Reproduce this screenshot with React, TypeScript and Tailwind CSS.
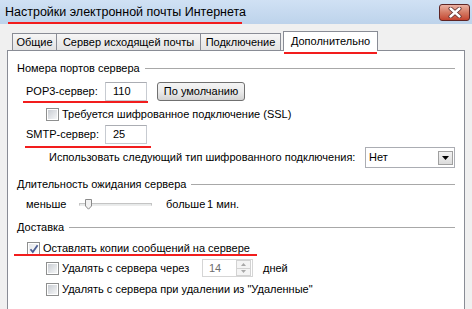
import React from "react";

function Checkbox({ checked = false }: { checked?: boolean }) {
  return (
    <div className="w-[13px] h-[13px] shrink-0 border border-[#8e8f8f] bg-white p-[1px] relative">
      <div
        className={
          checked
            ? "w-full h-full bg-gradient-to-br from-[#e6e8eb] to-[#fcfcfc]"
            : "w-full h-full bg-gradient-to-br from-[#c9cdd3] to-[#f5f6f7]"
        }
      />
      {checked && (
        <svg className="absolute left-[1px] top-[1px]" width="10" height="10" viewBox="0 0 10 10">
          <path d="M1.5 5.2 L3.8 8 L8.6 1.2" fill="none" stroke="#4b5d93" strokeWidth="1.8" />
        </svg>
      )}
    </div>
  );
}

function Header({ text }: { text: string }) {
  return (
    <div className="h-[16px] flex items-center ml-[9px] mr-[9px]">
      <span className="leading-none whitespace-nowrap">{text}</span>
      <div className="flex-1 h-px bg-[#a8a8a8] ml-[5px]" />
    </div>
  );
}

function TextField({ value, w }: { value: string; w: string }) {
  return (
    <div
      className={`${w} h-[19px] border border-[#c7cbd1] border-t-[#abadb3] bg-white flex items-center pl-[7px] leading-none`}
    >
      {value}
    </div>
  );
}

export default function App() {
  return (
    <div className="w-[472px] h-[309px] overflow-hidden bg-[#f0f0f0] font-['Liberation_Sans',Arial,sans-serif] text-[11px] text-black relative">
      {/* Title bar */}
      <div className="h-[24px] flex items-start bg-gradient-to-b from-[#d0e1f4] to-[#bdd3eb]">
        <span className="text-[12.5px] leading-none ml-[5px] mt-[6px] whitespace-nowrap">
          Настройки электронной почты Интернета
        </span>
        <div className="ml-auto mr-[2px] mt-[4px] w-[31px] h-[17px] rounded-[3px] border border-[#5e2525] bg-gradient-to-b from-[#eab1a4] via-[#d47a64] to-[#c4432f] flex items-center justify-center">
          <svg width="14" height="11" viewBox="0 0 14 11">
            <path d="M2.5 1.5 L11.5 9.5 M11.5 1.5 L2.5 9.5" stroke="#5b2a2a" strokeWidth="4" strokeLinecap="round" />
            <path d="M2.5 1.5 L11.5 9.5 M11.5 1.5 L2.5 9.5" stroke="#ffffff" strokeWidth="2.4" strokeLinecap="round" />
          </svg>
        </div>
      </div>

      {/* Tabs */}
      <div className="h-[26px] flex items-end pl-[12px]">
        <div className="w-[45px] h-[17px] border border-b-0 border-[#898c95] bg-gradient-to-b from-[#f6f6f6] to-[#e3e3e3] flex items-center justify-center leading-none">
          Общие
        </div>
        <div className="-ml-px w-[145px] h-[17px] border border-b-0 border-[#898c95] bg-gradient-to-b from-[#f6f6f6] to-[#e3e3e3] flex items-center justify-center leading-none whitespace-nowrap">
          Сервер исходящей почты
        </div>
        <div className="-ml-px w-[81px] h-[17px] border border-b-0 border-[#898c95] bg-gradient-to-b from-[#f6f6f6] to-[#e3e3e3] flex items-center justify-center leading-none">
          Подключение
        </div>
        <div className="ml-[2px] w-[95px] h-[20px] -mb-px relative z-10 border border-b-0 border-[#898c95] bg-white flex items-center justify-center leading-none pb-[1px]">
          Дополнительно
        </div>
      </div>

      {/* Panel */}
      <div className="ml-[7px] w-[458px] h-[270px] border border-[#898c95] bg-white flex flex-col">
        <div className="mt-[9px]">
          <Header text="Номера портов сервера" />
        </div>

        <div className="mt-[6px] h-[19px] flex items-center ml-[18px]">
          <span className="w-[79px] leading-none whitespace-nowrap">POP3-сервер:</span>
          <TextField value="110" w="w-[42px]" />
          <div className="ml-[10px] w-[88px] h-[19px] rounded-[3px] border border-[#707070] bg-gradient-to-b from-[#f4f4f4] via-[#ebebeb] to-[#d3d3d3] flex items-center justify-center leading-none whitespace-nowrap">
            По умолчанию
          </div>
        </div>

        <div className="mt-[6px] h-[14px] flex items-center ml-[38px]">
          <Checkbox />
          <span className="ml-[3px] leading-none whitespace-nowrap">Требуется шифрованное подключение (SSL)</span>
        </div>

        <div className="mt-[4px] h-[19px] flex items-center ml-[18px]">
          <span className="w-[79px] leading-none whitespace-nowrap">SMTP-сервер:</span>
          <TextField value="25" w="w-[42px]" />
        </div>

        <div className="mt-[3px] h-[21px] flex items-center ml-[41px] mr-[9px]">
          <span className="leading-none whitespace-nowrap">
            Использовать следующий тип шифрованного подключения:
          </span>
          <div className="ml-auto w-[90px] h-[21px] border border-[#abadb3] bg-white flex items-center pl-[3px] pr-[1px]">
            <span className="leading-none flex-1">Нет</span>
            <div className="w-[15px] h-[14px] border border-[#a0a0a0] bg-gradient-to-b from-[#f2f2f2] to-[#dcdcdc] flex items-center justify-center">
              <svg width="7" height="4" viewBox="0 0 7 4">
                <path d="M0 0 H7 L3.5 4 Z" fill="#000" />
              </svg>
            </div>
          </div>
        </div>

        <div className="mt-[8px]">
          <Header text="Длительность ожидания сервера" />
        </div>

        <div className="mt-[4px] h-[16px] flex items-center ml-[18px]">
          <span className="w-[53px] leading-none">меньше</span>
          <div className="w-[73px] h-[11px] relative flex items-center">
            <div className="w-full h-[3px] border border-[#c4c4c4] border-b-[#ececec] bg-[#e7eaea]" />
            <svg className="absolute left-[6px] top-0" width="7" height="11" viewBox="0 0 7 11">
              <path d="M0.5 0.5 H6.5 V7 L3.5 10.2 L0.5 7 Z" fill="#f1f1f1" stroke="#8a8a8a" strokeWidth="1" />
            </svg>
          </div>
          <span className="ml-[14px] w-[41px] leading-none whitespace-nowrap">больше</span>
          <span className="leading-none whitespace-nowrap">1 мин.</span>
        </div>

        <div className="mt-[7px]">
          <Header text="Доставка" />
        </div>

        <div className="mt-[6px] h-[14px] flex items-center ml-[19px]">
          <Checkbox checked />
          <span className="ml-[3px] leading-none whitespace-nowrap">Оставлять копии сообщений на сервере</span>
        </div>

        <div className="mt-[4px] h-[18px] flex items-center ml-[38px]">
          <Checkbox />
          <span className="ml-[3px] w-[140px] leading-none whitespace-nowrap">Удалять с сервера через</span>
          <div className="w-[51px] h-[18px] border border-[#d5d5d5] bg-white flex items-center pl-[6px] pr-px">
            <span className="flex-1 leading-none text-[#6d6d6d]">14</span>
            <div className="w-[15px] h-[16px] flex flex-col">
              <div className="flex-1 border border-[#d2d2d2] bg-[#f4f4f4] flex items-center justify-center">
                <svg width="5" height="3" viewBox="0 0 5 3">
                  <path d="M0 3 H5 L2.5 0 Z" fill="#a8a8a8" />
                </svg>
              </div>
              <div className="flex-1 border border-t-0 border-[#d2d2d2] bg-[#f4f4f4] flex items-center justify-center">
                <svg width="5" height="3" viewBox="0 0 5 3">
                  <path d="M0 0 H5 L2.5 3 Z" fill="#a8a8a8" />
                </svg>
              </div>
            </div>
          </div>
          <span className="ml-[10px] leading-none">дней</span>
        </div>

        <div className="mt-[5px] h-[14px] flex items-center ml-[38px]">
          <Checkbox />
          <span className="ml-[3px] leading-none whitespace-nowrap">
            Удалять с сервера при удалении из "Удаленные"
          </span>
        </div>
      </div>

      {/* Red annotation underlines */}
      <div className="absolute left-[8px] top-[22px] w-[234px] h-[2px] bg-[#f21d1d]" />
      <div className="absolute left-[284px] top-[52px] w-[93px] h-[2px] bg-[#f21d1d]" />
      <div className="absolute left-[23px] top-[101px] w-[125px] h-[2px] bg-[#f21d1d]" />
      <div className="absolute left-[25px] top-[146px] w-[126px] h-[2px] bg-[#f21d1d]" />
      <div className="absolute left-[14px] top-[254px] w-[243px] h-[2px] bg-[#f21d1d]" />
    </div>
  );
}
